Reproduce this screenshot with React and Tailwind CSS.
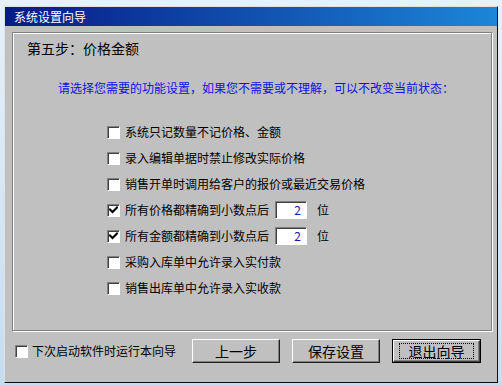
import React from 'react';

const FONT = { fontFamily: '"Noto Sans CJK SC", "Noto Sans", sans-serif' };

const Check = ({ checked }) => (
  <span className="w-[13px] h-[13px] shrink-0 bg-white border-t border-l border-t-[#808080] border-l-[#808080] border-b border-r border-b-white border-r-white shadow-[inset_1px_1px_0_#404040] flex items-center justify-center">
    {checked && (
      <svg width="9" height="9" viewBox="0 0 9 9" className="block">
        <path d="M1 3.5 L3.5 6 L8 1.5" stroke="#000" strokeWidth="2" fill="none" strokeLinecap="square" />
      </svg>
    )}
  </span>
);

const NumBox = ({ value }) => (
  <span className="ml-[6px] w-[32px] h-[18px] bg-white border-t border-l border-t-[#808080] border-l-[#808080] border-b border-r border-b-white border-r-white shadow-[inset_1px_1px_0_#404040] flex items-center justify-end pr-[5px] text-[12px] text-[#1a1a9a]">
    {value}
  </span>
);

const Btn = ({ children, focused }) =>
  focused ? (
    <button className="w-[89px] h-[24px] border border-black p-0 bg-[#c0c0c0]">
      <span className="h-full w-full flex items-center justify-center border-t border-l border-t-white border-l-white border-b border-r border-b-[#404040] border-r-[#404040] shadow-[inset_-1px_-1px_0_#808080]">
        <span className="w-[75px] h-[16px] flex items-center justify-center border border-dotted border-black text-[14px] leading-none text-black">
          {children}
        </span>
      </span>
    </button>
  ) : (
    <button className="w-[88px] h-[24px] flex items-center justify-center bg-[#c0c0c0] border-t border-l border-t-white border-l-white border-b border-r border-b-[#202020] border-r-[#202020] shadow-[inset_-1px_-1px_0_#808080] text-[14px] leading-none text-black">
      {children}
    </button>
  );

const options = [
  { label: '系统只记数量不记价格、金额' },
  { label: '录入编辑单据时禁止修改实际价格' },
  { label: '销售开单时调用给客户的报价或最近交易价格' },
  { label: '所有价格都精确到小数点后', checked: true, digits: '2' },
  { label: '所有金额都精确到小数点后', checked: true, digits: '2' },
  { label: '采购入库单中允许录入实付款' },
  { label: '销售出库单中允许录入实收款' },
];

export default function App() {
  return (
    <div className="w-[502px] h-[385px] overflow-hidden bg-[linear-gradient(180deg,#e6f1fa,#c4ddf2)] pt-[6px] pl-[4px]" style={FONT}>
      {/* Window */}
      <div className="w-[494px] h-[377px] bg-[#c0c0c0] border border-t-[#e0e0e0] border-l-[#e0e0e0] border-r-[#101010] border-b-[#101010] flex flex-col">
        {/* Title bar */}
        <div className="h-[19px] bg-[linear-gradient(90deg,#061a86,#1c86d8)] flex items-center pl-[9px]">
          <span className="text-white text-[12px] leading-none">系统设置向导</span>
        </div>

        {/* Panel */}
        <div className="mt-[6px] ml-[7px] w-[480px] h-[299px] border border-[#808080] shadow-[inset_1px_1px_0_#fff,1px_1px_0_#fff]">
          <div className="pt-[5px] pl-[14px] text-[14px] leading-[20px] text-black">第五步：价格金额</div>
          <div className="mt-[22px] pl-[45px] text-[12px] leading-[16px] text-[#1010e8]">
            请选择您需要的功能设置，如果您不需要或不理解，可以不改变当前状态：
          </div>
          <div className="mt-[23px] pl-[94px] flex flex-col">
            {options.map((o, i) => (
              <div key={i} className="h-[26px] flex items-center text-[12px] text-black">
                <Check checked={o.checked} />
                <span className="ml-[5px]">{o.label}</span>
                {o.digits && (
                  <>
                    <NumBox value={o.digits} />
                    <span className="ml-[10px]">位</span>
                  </>
                )}
              </div>
            ))}
          </div>
        </div>

        {/* Bottom row */}
        <div className="mt-[8px] h-[24px] flex items-center pl-[10px]">
          <Check />
          <span className="ml-[4px] text-[12px] text-black">下次启动软件时运行本向导</span>
          <div className="ml-auto mr-[16px] flex gap-[12px]">
            <Btn>上一步</Btn>
            <Btn>保存设置</Btn>
            <Btn focused>退出向导</Btn>
          </div>
        </div>
      </div>
    </div>
  );
}
